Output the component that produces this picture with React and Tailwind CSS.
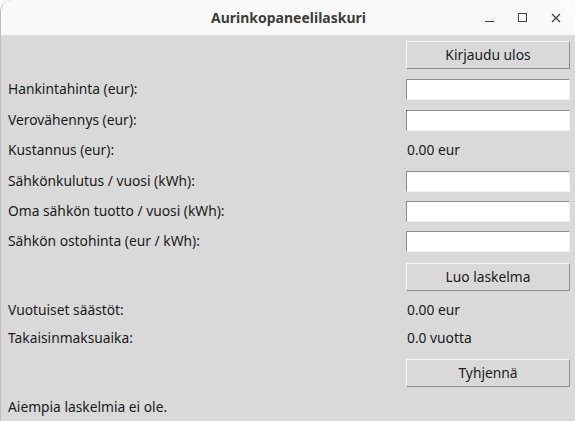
import React from 'react'

const font = { fontFamily: '"Noto Sans", "DejaVu Sans", sans-serif' }

function Btn({ children, className = '' }) {
  return (
    <div className={`w-[164px] h-[28px] flex items-center justify-center text-[13.8px] text-[#1a1a1a] bg-[#d9d9d9] border border-t-[#f6f6f6] border-l-[#f6f6f6] border-b-[#8c8c8c] border-r-[#8c8c8c] ${className}`}>
      {children}
    </div>
  )
}

function Entry() {
  return <div className="w-[164px] h-[21px] bg-white border border-t-[#8c8c8c] border-l-[#8c8c8c] border-b-[#f2f2f2] border-r-[#f2f2f2]" />
}

function Row({ label, h, children }) {
  return (
    <div className={`flex items-center ${h}`}>
      <div className="flex-1 pl-[7px] text-[13.8px] text-[#1a1a1a]">{label}</div>
      <div className="w-[164px] mr-[5px]">{children}</div>
    </div>
  )
}

export default function App() {
  return (
    <div className="w-[575px] h-[421px] bg-[#fafafa] overflow-hidden" style={font}>
      <div className="w-full h-full rounded-t-[12px] overflow-hidden bg-[#d9d9d9] flex flex-col border-l border-[#bdbdbd]">
        <div className="h-[36px] shrink-0 bg-[#fafafa] border-b border-[#dcdcdc] flex items-center relative">
          <div className="flex-1 text-center font-bold text-[14px] text-[#3d3d3d] pl-[1px]">Aurinkopaneelilaskuri</div>
          <div className="absolute right-0 top-0 h-full flex items-center">
            <div className="w-[33px] flex justify-center">
              <div className="w-[9px] h-[1px] bg-[#444] mt-[8px]" />
            </div>
            <div className="w-[33px] flex justify-center">
              <div className="w-[9px] h-[9px] border border-[#444]" />
            </div>
            <div className="w-[33px] flex justify-center mr-[3px]">
              <svg width="10" height="10" viewBox="0 0 10 10">
                <path d="M1 1L9 9M9 1L1 9" stroke="#444" strokeWidth="1.3" />
              </svg>
            </div>
          </div>
        </div>

        <div className="flex justify-end pr-[5px] mt-[5px]">
          <Btn>Kirjaudu ulos</Btn>
        </div>

        <Row label="Hankintahinta (eur):" h="h-[31px] mt-[5px]"><Entry /></Row>
        <Row label="Verovähennys (eur):" h="h-[30px]"><Entry /></Row>
        <Row label="Kustannus (eur):" h="h-[31px]"><div className="pl-[1px] text-[13.8px] text-[#1a1a1a]">0.00 eur</div></Row>
        <Row label="Sähkönkulutus / vuosi (kWh):" h="h-[30px]"><Entry /></Row>
        <Row label="Oma sähkön tuotto / vuosi (kWh):" h="h-[30px]"><Entry /></Row>
        <Row label="Sähkön ostohinta (eur / kWh):" h="h-[31px]"><Entry /></Row>

        <div className="flex justify-end pr-[5px] mt-[6px]">
          <Btn>Luo laskelma</Btn>
        </div>

        <Row label="Vuotuiset säästöt:" h="h-[28px] mt-[5px]"><div className="pl-[1px] text-[13.8px] text-[#1a1a1a]">0.00 eur</div></Row>
        <Row label="Takaisinmaksuaika:" h="h-[28px]"><div className="pl-[1px] text-[13.8px] text-[#1a1a1a]">0.0 vuotta</div></Row>

        <div className="flex justify-end pr-[5px] mt-[7px]">
          <Btn>Tyhjennä</Btn>
        </div>

        <div className="h-[28px] mt-[6px] flex items-center pl-[7px] text-[13.8px] text-[#1a1a1a]">Aiempia laskelmia ei ole.</div>
      </div>
    </div>
  )
}
